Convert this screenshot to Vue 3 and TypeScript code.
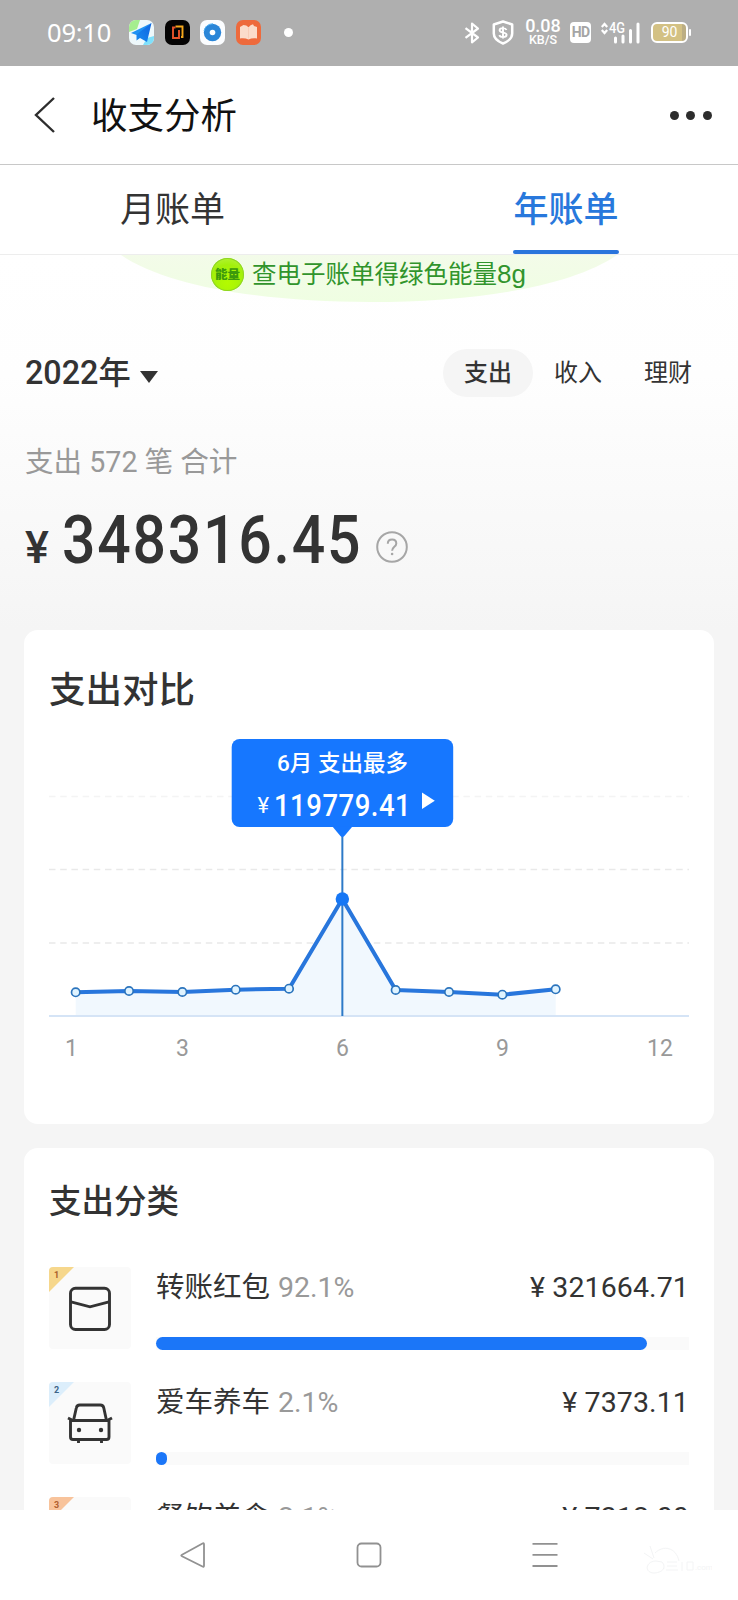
<script setup lang="ts">
interface Category {
  rank: number
  name: string
  percent: number
  amount: string
  icon: 'packet' | 'car' | 'food'
}

interface Point {
  x: number
  y: number
}

const filters: string[] = ['支出', '收入', '理财']

const categories: Category[] = [
  { rank: 1, name: '转账红包', percent: 92.1, amount: '321664.71', icon: 'packet' },
  { rank: 2, name: '爱车养车', percent: 2.1, amount: '7373.11', icon: 'car' },
  { rank: 3, name: '餐饮美食', percent: 2.1, amount: '7312.00', icon: 'food' },
]

const baseline = 277
const heights: number[] = [23.7, 25, 24, 26.3, 27.3, 117, 26, 24, 21.3, 26.7]
const points: Point[] = heights.map((h, i) => ({ x: 26.7 + i * 53.33, y: baseline - h }))
const line = points.map((p) => `${p.x.toFixed(1)},${p.y.toFixed(1)}`).join(' ')
const area = `${points[0].x},${baseline} ${line} ${points[9].x},${baseline}`
const peak = points[5]
const grid: number[] = [57.5, 130.5, 204]
const months = [
  { text: '1', x: 22.5 },
  { text: '3', x: 133.4 },
  { text: '6', x: 293.4 },
  { text: '9', x: 453.4 },
  { text: '12', x: 611 },
]
</script>

<template>
  <div class="screen">
    <div class="status">
      <span class="clock">09:10</span>
      <div class="apps">
        <svg class="app" viewBox="0 0 25 25">
          <defs>
            <clipPath id="tile"><rect width="25" height="25" rx="7" /></clipPath>
            <linearGradient id="plane" x1="0" y1="1" x2="1" y2="0">
              <stop offset="0" stop-color="#1a8cf0" />
              <stop offset="1" stop-color="#0d63e0" />
            </linearGradient>
          </defs>
          <g clip-path="url(#tile)">
            <rect width="25" height="25" fill="#eef8fb" />
            <path d="M0 0h11L8 9 0 12z" fill="#a5ee8e" />
            <path d="M14 25l4-7 7-2v9z" fill="#7fe0fb" />
            <path d="M22.500 3L2 13l7 2.500z" fill="#1f93f3" />
            <path d="M22.500 3L7.500 14.500v6l3.500-2.500 7 4z" fill="url(#plane)" />
          </g>
        </svg>
        <svg class="app" viewBox="0 0 25 25">
          <rect width="25" height="25" rx="7" fill="#050404" />
          <path d="M10.500 6.500h7v10.500H16" fill="none" stroke="#f6a81c" stroke-width="1.900" />
          <path d="M10.500 7.500H8v10.500h6V10" fill="none" stroke="#e8532a" stroke-width="1.900" />
        </svg>
        <svg class="app" viewBox="0 0 25 25">
          <rect width="25" height="25" rx="7" fill="#fbfdff" />
          <circle cx="12.500" cy="12.500" r="8.700" fill="#2a86d8" />
          <path d="M4 11a8.700 8.700 0 0 1 9-7.200" fill="none" stroke="#56b4f2" stroke-width="1" />
          <circle cx="12.500" cy="12.500" r="2.800" fill="#fff" />
        </svg>
        <svg class="app" viewBox="0 0 25 25">
          <rect width="25" height="25" rx="7" fill="#ee6a3c" />
          <path d="M4 7l3.500-2q3 0 5 2.300 2-2.300 4.500-3l1 1.700 3 1v11.500c-3-.6-6-.3-8.500 1-2.500-1.300-5.500-1.600-8.500-1z" fill="#fbdccb" />
          <path d="M12.500 7.500v11" stroke="#f7cdb8" stroke-width="1" />
        </svg>
      </div>
      <i class="more-dot"></i>
      <div class="signals">
        <svg class="bt" viewBox="0 0 16 22">
          <path d="M1.500 6.200l12.500 9.300-6 4.800V1.700l6 4.800L1.500 15.800" fill="none" stroke="#fff" stroke-width="2.200" stroke-linejoin="round" />
        </svg>
        <svg class="shield" viewBox="0 0 22 25">
          <path d="M11 1.500l9.200 3v9c0 4.500-3.700 7.800-9.200 10-5.500-2.200-9.200-5.500-9.200-10v-9z" fill="none" stroke="#fff" stroke-width="2.500" stroke-linejoin="round" />
          <path d="M14.500 10c-.5-1.300-1.800-1.900-3.500-1.900-2.100 0-3.400.8-3.400 2.200 0 3.200 7 1.400 7 4.500 0 1.500-1.500 2.300-3.600 2.300-1.900 0-3.200-.6-3.700-1.900M11 6.500v12" fill="none" stroke="#fff" stroke-width="1.900" />
        </svg>
        <div class="speed"><b>0.08</b><b class="unit">KB/S</b></div>
        <span class="hd">HD</span>
        <svg class="cell" viewBox="0 0 40 22">
          <path d="M.8 5L3.500 2 6.200 5M.8 8l2.700 3L6.200 8" fill="none" stroke="#fff" stroke-width="2.200" />
          <text x="8" y="11" textLength="16" lengthAdjust="spacingAndGlyphs">4G</text>
          <path d="M14.500 16v4M22 14v6M29.500 8.500v11.500M37 2v18" stroke="#fff" stroke-width="3" stroke-linecap="round" />
        </svg>
        <div class="battery"><span>90</span></div>
      </div>
    </div>

    <header class="bar">
      <svg class="back" viewBox="0 0 22 36">
        <path d="M20 1L2 18l18 17" fill="none" stroke="#2d2d2d" stroke-width="2.400" />
      </svg>
      <h1>收支分析</h1>
      <div class="dots"><i></i><i></i><i></i></div>
    </header>

    <nav class="tabs">
      <span class="tab"><em>月账单</em></span>
      <span class="tab active"><em>年账单</em></span>
    </nav>

    <main class="content">
      <div class="energy">
        <svg class="hill" viewBox="0 0 496 48" preserveAspectRatio="none">
          <defs>
            <linearGradient id="hill" x1="0" y1="0" x2="0" y2="1">
              <stop offset="0" stop-color="#f3fbe9" />
              <stop offset="1" stop-color="#effee2" />
            </linearGradient>
          </defs>
          <path d="M0 0C48 33 149 47 249 47S448 33 496 0z" fill="url(#hill)" />
        </svg>
        <div class="energy-text">
          <i class="coin">能量</i>
          <span>查电子账单得绿色能量<span class="gram">8g</span></span>
        </div>
      </div>

      <div class="period">
        <div class="year">2022年<i class="caret"></i></div>
        <div class="filters">
          <span v-for="(f, i) in filters" :key="f" class="filter" :class="{ on: i === 0 }">{{ f }}</span>
        </div>
      </div>

      <p class="count">支出 572 笔 合计</p>
      <div class="total">
        <span class="yen">¥</span>
        <strong>348316.45</strong>
        <svg class="help" viewBox="0 0 32 32">
          <circle cx="16" cy="16" r="14.800" fill="none" stroke="#a6a6a6" stroke-width="2" />
          <path d="M11.800 12.800c0-2.600 1.800-4.200 4.300-4.200s4.200 1.600 4.200 3.900c0 3.300-4.200 3.500-4.200 7.300" fill="none" stroke="#a6a6a6" stroke-width="2" />
          <circle cx="16.100" cy="23" r="1.300" fill="#a6a6a6" />
        </svg>
      </div>

      <section class="card compare">
        <h2>支出对比</h2>
        <svg class="chart" viewBox="0 0 640 330">
          <path v-for="(g, i) in grid" :key="g" :d="`M0 ${g}H640`" :stroke="i ? '#e9e9e9' : '#f4f4f4'" stroke-width="1.500" stroke-dasharray="6.500 4.700" />
          <polygon :points="area" fill="#f1f8fe" />
          <path :d="`M0 ${baseline}H640`" stroke="#d5e4f6" stroke-width="2" />
          <path :d="`M${peak.x} 90V${baseline}`" stroke="#2d7ac8" stroke-width="2" />
          <polyline :points="line" fill="none" stroke="#2876dc" stroke-width="4" stroke-linejoin="round" />
          <template v-for="(p, i) in points" :key="i">
            <circle v-if="i === 5" :cx="p.x" :cy="p.y" r="6.700" fill="#1677f5" />
            <circle v-else :cx="p.x" :cy="p.y" r="4.200" fill="#dff3ff" stroke="#2b74bd" stroke-width="1.700" />
          </template>
          <rect x="182.700" y="0" width="221.500" height="88" rx="8" fill="#1677ff" />
          <path d="M283.400 87.500h20l-8 9.500q-2 2-4 0z" fill="#1677ff" />
          <text class="tip-title" x="293.500" y="31.500" textLength="131">6月 支出最多</text>
          <text class="tip-yen" x="208.500" y="74">¥</text>
          <text class="tip-value" transform="translate(225 76.500) scale(0.86 1)" textLength="159">119779.41</text>
          <path d="M373 53.500l12.800 8.200L373 70z" fill="#fff" />
          <text v-for="m in months" :key="m.text" class="month" :x="m.x" y="317">{{ m.text }}</text>
        </svg>
      </section>

      <section class="card classes">
        <h2>支出分类</h2>
        <div v-for="c in categories" :key="c.rank" class="row">
          <div class="tile">
            <i class="rank" :class="`r${c.rank}`">{{ c.rank }}</i>
            <svg v-if="c.icon === 'packet'" class="glyph" viewBox="0 0 46 46">
              <rect x="3.500" y="3.200" width="39" height="41.300" rx="5" />
              <path d="M4 16.800l19 5 19-5" />
            </svg>
            <svg v-else-if="c.icon === 'car'" class="glyph" viewBox="0 0 46 46">
              <path d="M6.500 20.500L9.300 8q.6-3 3.500-3h20.500q2.900 0 3.500 3l2.700 12.500" />
              <path d="M3.500 20.500H42V37q0 2.500-2.500 2.500H6Q3.500 39.500 3.500 37zM1 18l4 2M45 18l-4 2M11.500 40v3M34.500 40v3" />
              <circle class="lamp" cx="12" cy="30" r="2.200" />
              <circle class="lamp" cx="34" cy="30" r="2.200" />
            </svg>
            <svg v-else class="glyph" viewBox="0 0 46 46">
              <path d="M4 22h38q0 18-19 18T4 22z" />
            </svg>
          </div>
          <div class="detail">
            <div class="labels">
              <span>{{ c.name }}</span>
              <span class="pct">{{ c.percent }}%</span>
              <span class="amount">¥ {{ c.amount }}</span>
            </div>
            <div class="track"><div class="fill" :style="{ width: c.percent + '%' }"></div></div>
          </div>
        </div>
      </section>
    </main>

    <footer class="keys">
      <svg viewBox="0 0 26 26"><path d="M22.500 1.500q1.500-.8 1.500 1v21q0 1.800-1.500 1L2 14.300q-1.500-.8 0-1.600z" /></svg>
      <svg viewBox="0 0 26 26"><rect x="1.500" y="1.500" width="23" height="23" rx="4" /></svg>
      <svg viewBox="0 0 26 26"><path d="M.5 1.800h25M.5 12.900h25M.5 24h25" /></svg>
      <svg class="mark" viewBox="0 0 70 30">
        <path d="M2 8l9 6M8 1l4 12M14 16c-10 0-12 11-3 12 9 0 14-5 9-11zM13 8c8-8 21-6 24 8M25 17h10M25 21h10M24 25h12M40 17v9M45 17h6v8h-6z" />
        <text x="53" y="25">.com</text>
      </svg>
    </footer>
  </div>
</template>

<style>
body {
  margin: 0;
}
</style>

<style scoped>
.screen {
  width: 738px;
  height: 1600px;
  overflow: hidden;
  display: flex;
  flex-direction: column;
  background: #fff;
  color: #333;
  font-family: Roboto, "Noto Sans CJK SC", sans-serif;
}
i,
em {
  font-style: normal;
}
.status {
  flex: none;
  height: 66px;
  box-sizing: border-box;
  padding: 0 47px 1px;
  display: flex;
  align-items: center;
  background: #afafaf;
  color: #fff;
}
.clock {
  width: 82px;
  font-family: "Noto Sans", sans-serif;
  font-size: 25.5px;
  letter-spacing: -0.2px;
  line-height: 65px;
}
.apps {
  display: flex;
  gap: 10.7px;
}
.app {
  width: 25px;
  height: 25px;
}
.more-dot {
  width: 9px;
  height: 9px;
  margin-left: 23px;
  border-radius: 50%;
  background: #fff;
}
.signals {
  display: flex;
  align-items: center;
  margin-left: auto;
}
.bt {
  width: 16px;
  height: 22px;
}
.shield {
  width: 22px;
  height: 25px;
  margin-left: 12px;
}
.speed {
  width: 36px;
  margin-left: 11px;
  display: flex;
  flex-direction: column;
  align-items: center;
  font-size: 18px;
  line-height: 14px;
}
.speed b {
  font-weight: 500;
}
.speed .unit {
  font-size: 12.5px;
  line-height: 13px;
}
.hd {
  width: 21px;
  height: 21px;
  margin-left: 9px;
  border-radius: 4px;
  background: #fff;
  color: #a5a5a5;
  font-size: 14px;
  font-weight: 700;
  letter-spacing: -0.8px;
  line-height: 21px;
  text-align: center;
}
.cell {
  width: 40px;
  height: 22px;
  margin-left: 10px;
}
.cell text {
  fill: #fff;
  font-size: 14px;
  font-weight: 500;
}
.battery {
  position: relative;
  width: 33px;
  height: 17px;
  margin-left: 10px;
  margin-right: 3px;
  border: 2px solid #fff;
  border-radius: 6px;
  background: linear-gradient(90deg, #d3c184 88%, #bcae83 88%);
  font-size: 14px;
  line-height: 17px;
  text-align: center;
}
.battery::after {
  content: "";
  position: absolute;
  right: -5px;
  top: 5px;
  width: 2px;
  height: 7px;
  border-radius: 1px;
  background: #fff;
}
.bar {
  flex: none;
  height: 99px;
  box-sizing: border-box;
  padding: 0 26px 0 34px;
  display: flex;
  align-items: center;
  border-bottom: 1px solid #c8c8c8;
}
.back {
  width: 22px;
  height: 36px;
}
h1 {
  margin: 3px 0 0 35px;
  font-size: 36.5px;
  font-weight: 400;
  line-height: 95px;
  color: #111;
}
.dots {
  margin-left: auto;
  display: flex;
  gap: 7.700px;
}
.dots i {
  width: 9px;
  height: 9px;
  border-radius: 50%;
  background: #2d2d2d;
}
.tabs {
  flex: none;
  position: relative;
  z-index: 1;
  height: 89px;
  display: grid;
  grid-template-columns: 345px 442px;
  border-bottom: 1px solid #ededed;
}
.tab {
  display: flex;
  justify-content: center;
  font-size: 35px;
}
.tab em {
  position: relative;
  padding-top: 3px;
  line-height: 85px;
}
.active {
  color: #2878dc;
  font-weight: 500;
}
.active em::after {
  content: "";
  position: absolute;
  left: 0;
  right: 0;
  bottom: 0;
  height: 4px;
  border-radius: 2px;
  background: #2a74dc;
}
.content {
  height: 1255px;
  overflow: hidden;
  background: linear-gradient(#fff 0, #fefefe 120px, #f5f5f5 375px);
}
.energy {
  position: relative;
  height: 48px;
}
.hill {
  position: absolute;
  left: 121px;
  top: 0;
  width: 496px;
  height: 48px;
}
.energy-text {
  position: relative;
  display: flex;
  align-items: center;
  padding: 3px 0 0 211px;
  color: #31942c;
  font-size: 24.5px;
  line-height: 33px;
}
.gram {
  font-family: "Liberation Sans", sans-serif;
  font-size: 26px;
}
.coin {
  width: 33px;
  height: 33px;
  margin-right: 8px;
  border-radius: 50%;
  box-shadow: inset 0 0 0 1px #8fd426;
  background: radial-gradient(circle at 50% 75%, #b4fb00, #a2f00c 60%, #baf44c);
  color: #3c9a0c;
  font-size: 12.5px;
  font-weight: 900;
  text-align: center;
}
.period {
  display: flex;
  justify-content: space-between;
  height: 48px;
  margin-top: 46px;
  padding: 0 25px;
}
.year {
  display: flex;
  align-items: center;
  font-size: 32.3px;
  font-weight: 500;
  line-height: 46px;
  height: 47px;
}
.caret {
  margin: 8px 0 0 9px;
  border: solid transparent;
  border-width: 12px 9.500px 0;
  border-top-color: #333;
}
.filters {
  display: flex;
}
.filter {
  width: 90px;
  border-radius: 24px;
  font-size: 24px;
  line-height: 48px;
  text-align: center;
}
.on {
  background: #f5f5f5;
  font-weight: 500;
}
.count {
  margin: 45px 25px 0;
  font-size: 28.6px;
  line-height: 40px;
  color: #999;
}
.total {
  display: flex;
  align-items: baseline;
  height: 74px;
  padding: 0 25px;
  margin-top: 21px;
  line-height: 74px;
}
.yen {
  width: 37px;
  font-size: 45px;
  font-weight: 500;
}
.total strong {
  width: 294px;
  font-size: 67px;
  font-weight: 500;
  letter-spacing: 2px;
  transform: scaleX(0.88);
  transform-origin: left;
}
.help {
  width: 32px;
  height: 32px;
  margin-left: 20px;
}
.card {
  margin: 0 24px;
  box-sizing: border-box;
  padding: 0 25px;
  border-radius: 14px;
  background: #fff;
}
.compare {
  height: 494px;
  margin-top: 53px;
  padding-top: 36px;
}
h2 {
  margin: 0;
  font-size: 36.5px;
  font-weight: 500;
  line-height: 50px;
}
.chart {
  display: block;
  width: 640px;
  height: 330px;
  margin-top: 23px;
}
.tip-title {
  fill: #fff;
  font-size: 22.5px;
  font-weight: 500;
  text-anchor: middle;
}
.tip-yen {
  fill: #fff;
  font-size: 22px;
}
.tip-value {
  fill: #fff;
  font-size: 32px;
  font-weight: 500;
}
.month {
  fill: #999;
  font-size: 23px;
  text-anchor: middle;
}
.classes {
  margin-top: 24px;
  padding-top: 29px;
}
.classes h2 {
  font-size: 32.5px;
  margin-bottom: 40px;
}
.row {
  display: flex;
  height: 115px;
}
.tile {
  position: relative;
  flex: none;
  width: 82px;
  height: 82px;
  border-radius: 4px;
  overflow: hidden;
  background: #fafafa;
}
.rank {
  position: absolute;
  left: 0;
  top: 0;
  width: 25px;
  height: 25px;
  padding-left: 5px;
  box-sizing: border-box;
  clip-path: polygon(0 0, 100% 0, 0 100%);
  font-size: 9px;
  font-weight: 700;
  line-height: 16px;
}
.r1 {
  background: #f6d78c;
  color: #a9622c;
}
.r2 {
  background: #dceefb;
  color: #3d6487;
}
.r3 {
  background: #f8c39b;
  color: #b0602f;
}
.glyph {
  display: block;
  width: 46px;
  height: 46px;
  margin: 18px 0 0 18px;
  fill: none;
  stroke: #333;
  stroke-width: 2.900;
}
.lamp {
  fill: #333;
  stroke: none;
}
.detail {
  flex: 1;
  padding-left: 25px;
}
.labels {
  display: flex;
  font-size: 28.5px;
  line-height: 42px;
}
.pct {
  margin-left: 8px;
  color: #999;
}
.amount {
  margin-left: auto;
  letter-spacing: 0.12px;
}
.track {
  height: 12.500px;
  margin-top: 28px;
  background: #fafafa;
}
.fill {
  height: 100%;
  border-radius: 6.500px;
  background: #1b76f8;
}
.keys {
  flex: none;
  height: 90px;
  display: flex;
  align-items: center;
  gap: 150.300px;
  padding-left: 179.500px;
  background: #fff;
}
.keys svg {
  flex: none;
  width: 26px;
  height: 26px;
  fill: none;
  stroke: #919191;
  stroke-width: 1.800;
}
.keys .mark {
  width: 70px;
  height: 30px;
  margin-left: -66px;
  margin-top: 10px;
  stroke: #f3f4f5;
  stroke-width: 1;
}
.mark text {
  fill: #f3f4f5;
  stroke: none;
  font-size: 8px;
}
</style>
